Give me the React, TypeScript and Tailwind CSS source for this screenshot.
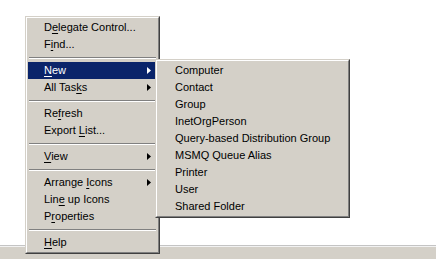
import { Fragment } from "react";

type Item = { label: string; key?: number; arrow?: boolean; active?: boolean } | "sep";

const mainItems: Item[] = [
  { label: "Delegate Control...", key: 1 },
  { label: "Find...", key: 1 },
  "sep",
  { label: "New", key: 0, arrow: true, active: true },
  { label: "All Tasks", key: 7, arrow: true },
  "sep",
  { label: "Refresh", key: 2 },
  { label: "Export List...", key: 7 },
  "sep",
  { label: "View", key: 0, arrow: true },
  "sep",
  { label: "Arrange Icons", key: 8, arrow: true },
  { label: "Line up Icons", key: 3 },
  { label: "Properties", key: 1 },
  "sep",
  { label: "Help", key: 0 },
];

const newItems = [
  "Computer",
  "Contact",
  "Group",
  "InetOrgPerson",
  "Query-based Distribution Group",
  "MSMQ Queue Alias",
  "Printer",
  "User",
  "Shared Folder",
];

function Label({ text, k }: { text: string; k?: number }) {
  if (k === undefined) return <span>{text}</span>;
  return (
    <span>
      {text.slice(0, k)}
      <span className="underline underline-offset-[2px]">{text[k]}</span>
      {text.slice(k + 1)}
    </span>
  );
}

function Arrow({ white }: { white?: boolean }) {
  return (
    <svg width="4" height="7" viewBox="0 0 4 7" className="absolute right-[6px] top-[5px]">
      <path d="M0 0 L4 3.5 L0 7 Z" fill={white ? "#ffffff" : "#000000"} />
    </svg>
  );
}

function Panel({ children, className }: { children: React.ReactNode; className: string }) {
  // classic raised 3d frame
  return (
    <div className={`absolute border border-t-[#d4d0c8] border-l-[#d4d0c8] border-r-[#404040] border-b-[#404040] ${className}`}>
      <div className="border border-t-white border-l-white border-r-[#808080] border-b-[#808080] bg-[#d4d0c8] p-px">
        {children}
      </div>
    </div>
  );
}

export default function App() {
  return (
    <div
      className="relative w-[436px] h-[259px] bg-white overflow-hidden text-[11px] text-black"
      style={{ fontFamily: '"Liberation Sans", Arial, sans-serif' }}
    >
      {/* status bar strip at the bottom */}
      <div className="absolute left-0 right-0 bottom-0 h-[14px] border-t border-[#c4c4c4] bg-[#d4d0c8]">
        <div className="h-px bg-[#f2f2f2]" />
      </div>

      {/* main context menu */}
      <Panel className="left-[25px] top-[16px] w-[135px]">
        {mainItems.map((it, i) =>
          it === "sep" ? (
            <div key={i} className="h-[9px] flex flex-col justify-center px-px">
              <div className="h-px bg-[#808080]" />
              <div className="h-px bg-white" />
            </div>
          ) : (
            <div
              key={i}
              className={`relative h-[17px] leading-[17px] pl-[16px] ${it.active ? "bg-[#0a246a] text-white" : ""}`}
            >
              <Label text={it.label} k={it.key} />
              {it.arrow && <Arrow white={it.active} />}
            </div>
          )
        )}
      </Panel>

      {/* New submenu */}
      <Panel className="left-[155px] top-[59px] w-[195px]">
        {newItems.map((t) => (
          <Fragment key={t}>
            <div className="h-[17px] leading-[17px] pl-[17px]">{t}</div>
          </Fragment>
        ))}
      </Panel>
    </div>
  );
}
